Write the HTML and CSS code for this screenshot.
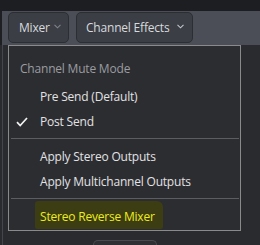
FILE: index.html
```html
<!DOCTYPE html>
<html>
<head>
<meta charset="utf-8">
<link rel="stylesheet" href="styles.css">
</head>
<body>
<div class="topbar"></div>
<div class="toolbar">
  <div class="btn btn-mixer">Mixer<svg class="chev dim" width="7" height="5" viewBox="0 0 7 5"><polyline points="0.5,0.8 3.5,3.8 6.5,0.8" fill="none" stroke="currentColor" stroke-width="1.1"/></svg></div>
  <div class="btn btn-fx">Channel Effects<svg class="chev" width="7" height="5" viewBox="0 0 7 5"><polyline points="0.5,0.8 3.5,3.8 6.5,0.8" fill="none" stroke="currentColor" stroke-width="1.1"/></svg></div>
</div>
<div class="content">
  <div class="edge"></div>
  <div class="under-btn"></div>
  <div class="menu">
    <div class="header">Channel Mute Mode</div>
    <div class="item first">Pre Send (Default)</div>
    <div class="item"><svg class="check" width="12" height="10" viewBox="0 0 12 10"><polyline points="1,5.2 4.2,8.6 11,1" fill="none" stroke="#f2f2f2" stroke-width="1.7"/></svg>Post Send</div>
    <div class="sep"></div>
    <div class="item">Apply Stereo Outputs</div>
    <div class="item">Apply Multichannel Outputs</div>
    <div class="sep"></div>
    <div class="item hl-row"><span class="hl">Stereo Reverse Mixer</span></div>
  </div>
</div>
</body>
</html>
```
FILE: styles.css
```css
html, body {
  margin: 0;
  padding: 0;
}
body {
  width: 260px;
  height: 245px;
  overflow: hidden;
  background: #1e1f22;
  font-family: "Open Sans", "Noto Sans", sans-serif;
  font-size: 12px;
  letter-spacing: -0.2px;
  display: flex;
  flex-direction: column;
}
.topbar {
  flex-shrink: 0;
  height: 11px;
  background: #1d1e21;
}
.toolbar {
  flex-shrink: 0;
  height: 34px;
  margin-left: 2px;
  background: #4b4e56;
  display: flex;
  align-items: flex-start;
  box-sizing: border-box;
  padding: 1px 0 0 6px;
  gap: 7px;
}
.btn {
  height: 31px;
  box-sizing: border-box;
  border: 1px solid #2c2e33;
  border-radius: 5px;
  background: #3b3e45;
  color: #d9dadd;
  display: flex;
  align-items: center;
  line-height: 18px;
  white-space: nowrap;
}
.btn-mixer {
  width: 61px;
  padding-left: 10px;
}
.btn-fx {
  width: 117px;
  padding-left: 9px;
}
.chev {
  color: #c4c6ca;
  margin-left: auto;
  margin-right: 8px;
  margin-top: -3px;
}
.chev.dim {
  color: #80838a;
  margin-right: 7px;
}
.content {
  flex: 1;
  min-height: 0;
  position: relative;
  overflow: hidden;
  background: #2a2b2f;
}
.edge {
  position: absolute;
  left: 2px;
  top: 0;
  bottom: 0;
  width: 1px;
  background: #45464b;
}
.under-btn {
  margin: 195px 0 0 93px;
  width: 64px;
  height: 5px;
  box-sizing: border-box;
  border: 1px solid #4a4b50;
  border-bottom: none;
  border-radius: 6px 6px 0 0;
  background: #2f3034;
}
.menu {
  position: absolute;
  left: 8px;
  top: 0;
  width: 233px;
  height: 186px;
  box-sizing: border-box;
  border: 1px solid #8a8a8c;
  background: #2c2d31;
  padding-top: 10px;
}
.header {
  height: 25px;
  line-height: 25px;
  padding-left: 11px;
  color: #9b9ca0;
}
.item {
  position: relative;
  height: 25px;
  line-height: 25px;
  padding-left: 31px;
  color: #e2e2e4;
  white-space: nowrap;
}
.item.first {
  margin-top: 3px;
}
.check {
  position: absolute;
  left: 7px;
  top: 8px;
}
.sep {
  height: 1px;
  background: #5c5d62;
  margin: 4px 1px 5px 2px;
}
.hl-row {
  padding-left: 26px;
  height: 25px;
}
.hl {
  display: inline-block;
  margin-top: -3px;
  padding: 3px 8px 0 5px;
  height: 25px;
  line-height: 25px;
  background: #3c3d12;
  color: #ecec1c;
  border-radius: 3px 6px 2px 2px;
}
```
